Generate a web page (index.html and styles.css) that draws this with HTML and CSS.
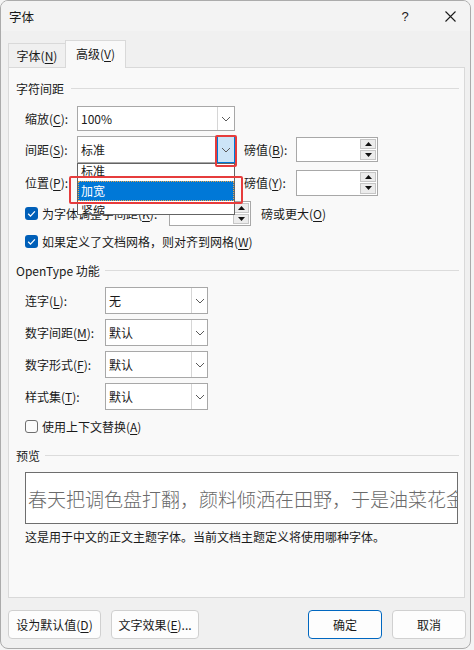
FILE: index.html
```html
<!DOCTYPE html>
<html lang="zh-CN">
<head>
<meta charset="utf-8">
<title>字体</title>
<link rel="stylesheet" href="styles.css">
</head>
<body>
<div class="window">
  <div class="titlebar">
    <span class="title">字体</span>
    <span class="tb-btn help">?</span>
    <span class="tb-btn close"><svg width="11" height="11" viewBox="0 0 11 11"><path d="M0.5 0.5L10.5 10.5M10.5 0.5L0.5 10.5" stroke="#1b1b1b" stroke-width="1.1" fill="none"/></svg></span>
  </div>
  <div class="tabs">
    <div class="tab">字体(<u>N</u>)</div>
    <div class="tab active">高级(<u>V</u>)</div>
  </div>
  <div class="panel">
    <div class="group-head"><span>字符间距</span><i class="rule"></i></div>

    <div class="row r-scale">
      <span class="lbl w52">缩放(<u>C</u>):</span>
      <div class="combo w158 h25"><span class="val">100%</span><span class="btn"><svg width="10" height="6" viewBox="0 0 10 6"><path d="M1 1L5 5L9 1" stroke="#5a5a5a" stroke-width="1" fill="none"/></svg></span></div>
    </div>

    <div class="row r-spacing">
      <span class="lbl w52">间距(<u>S</u>):</span>
      <div class="combo w158 h27 open">
        <span class="val">标准</span>
        <span class="btn hot"><svg width="10" height="6" viewBox="0 0 10 6"><path d="M1 1L5 5L9 1" stroke="#5a5a5a" stroke-width="1" fill="none"/></svg></span>
        <div class="list">
          <div class="item first">标准</div>
          <div class="item sel">加宽</div>
          <div class="item">紧缩</div>
        </div>
        <div class="mark mark-btn"></div>
        <div class="mark mark-item"></div>
      </div>
      <span class="lbl w52 ml9">磅值(<u>B</u>):</span>
      <div class="spin h25"><span class="spin-val"></span><span class="spin-btns"><span class="sb"><svg width="7" height="4" viewBox="0 0 7 4"><path d="M0 4L3.5 0L7 4Z" fill="#111"/></svg></span><span class="sb"><svg width="7" height="4" viewBox="0 0 7 4"><path d="M0 0L3.5 4L7 0Z" fill="#111"/></svg></span></span></div>
    </div>

    <div class="row r-pos">
      <span class="lbl w52">位置(<u>P</u>):</span>
      <span class="spacer w158"></span>
      <span class="lbl w52 ml9">磅值(<u>Y</u>):</span>
      <div class="spin h26"><span class="spin-val"></span><span class="spin-btns"><span class="sb"><svg width="7" height="4" viewBox="0 0 7 4"><path d="M0 4L3.5 0L7 4Z" fill="#111"/></svg></span><span class="sb"><svg width="7" height="4" viewBox="0 0 7 4"><path d="M0 0L3.5 4L7 0Z" fill="#111"/></svg></span></span></div>
    </div>

    <div class="row r-kern">
      <span class="cb on"><svg width="13" height="13" viewBox="0 0 13 13"><path d="M3.2 6.8L5.5 9.1L9.9 4.4" stroke="#fff" stroke-width="1.3" fill="none"/></svg></span>
      <span class="cb-lbl w127">为字体调整字间距(<u>K</u>):</span>
      <div class="spin h25"><span class="spin-val"></span><span class="spin-btns"><span class="sb"><svg width="7" height="4" viewBox="0 0 7 4"><path d="M0 4L3.5 0L7 4Z" fill="#111"/></svg></span><span class="sb"><svg width="7" height="4" viewBox="0 0 7 4"><path d="M0 0L3.5 4L7 0Z" fill="#111"/></svg></span></span></div>
      <span class="lbl ml10">磅或更大(<u>O</u>)</span>
    </div>

    <div class="row r-grid">
      <span class="cb on"><svg width="13" height="13" viewBox="0 0 13 13"><path d="M3.2 6.8L5.5 9.1L9.9 4.4" stroke="#fff" stroke-width="1.3" fill="none"/></svg></span>
      <span class="cb-lbl">如果定义了文档网格，则对齐到网格(<u>W</u>)</span>
    </div>

    <div class="group-head g-ot"><span>OpenType 功能</span><i class="rule"></i></div>

    <div class="row r-ot first-ot">
      <span class="lbl w80">连字(<u>L</u>):</span>
      <div class="combo w103 h27"><span class="val">无</span><span class="btn b16"><svg width="10" height="6" viewBox="0 0 10 6"><path d="M1 1L5 5L9 1" stroke="#5a5a5a" stroke-width="1" fill="none"/></svg></span></div>
    </div>
    <div class="row r-ot">
      <span class="lbl w80">数字间距(<u>M</u>):</span>
      <div class="combo w103 h27"><span class="val">默认</span><span class="btn b16"><svg width="10" height="6" viewBox="0 0 10 6"><path d="M1 1L5 5L9 1" stroke="#5a5a5a" stroke-width="1" fill="none"/></svg></span></div>
    </div>
    <div class="row r-ot">
      <span class="lbl w80">数字形式(<u>F</u>):</span>
      <div class="combo w103 h27"><span class="val">默认</span><span class="btn b16"><svg width="10" height="6" viewBox="0 0 10 6"><path d="M1 1L5 5L9 1" stroke="#5a5a5a" stroke-width="1" fill="none"/></svg></span></div>
    </div>
    <div class="row r-ot">
      <span class="lbl w80">样式集(<u>T</u>):</span>
      <div class="combo w103 h27"><span class="val">默认</span><span class="btn b16"><svg width="10" height="6" viewBox="0 0 10 6"><path d="M1 1L5 5L9 1" stroke="#5a5a5a" stroke-width="1" fill="none"/></svg></span></div>
    </div>

    <div class="row r-ctx">
      <span class="cb off"></span>
      <span class="cb-lbl">使用上下文替换(<u>A</u>)</span>
    </div>

    <div class="group-head g-pv"><span>预览</span><i class="rule"></i></div>
    <div class="preview"><span class="pv-text">春天把调色盘打翻，颜料倾洒在田野，于是油菜花金黄</span></div>
    <div class="caption">这是用于中文的正文主题字体。当前文档主题定义将使用哪种字体。</div>
  </div>
  <div class="footer">
    <span class="button b-default">设为默认值(<u>D</u>)</span>
    <span class="button b-effect">文字效果(<u>E</u>)...</span>
    <span class="button b-ok">确定</span>
    <span class="button b-cancel">取消</span>
  </div>
</div>
</body>
</html>
```
FILE: styles.css
```css
* { box-sizing: border-box; }
html, body { margin: 0; padding: 0; }
body {
  width: 474px;
  height: 650px;
  overflow: hidden;
  background: #f4f4f4;
  font-family: "Noto Sans CJK SC", "Microsoft YaHei", sans-serif;
  font-size: 12px;
  color: #1a1a1a;
}
u { text-decoration: underline; text-underline-offset: 2px; text-decoration-thickness: 1px; }

.window {
  width: 471px;
  height: 649px;
  border: 1px solid #ababab;
  border-radius: 8px;
  background: #f0f0f0;
  overflow: hidden;
  display: flex;
  flex-direction: column;
}

.titlebar {
  flex: none;
  height: 30px;
  background: #f3f3f3;
  display: flex;
  align-items: center;
}
.title { margin-left: 8px; font-size: 12.5px; }
.tb-btn { width: 40px; height: 30px; display: flex; align-items: center; justify-content: center; }
.help { margin-left: auto; margin-right: 5px; font-size: 13px; font-family: "Liberation Sans", sans-serif; }

.tabs {
  flex: none;
  height: 36px;
  display: flex;
  align-items: flex-end;
  padding-left: 7px;
  position: relative;
  z-index: 2;
}
.tab {
  width: 58px;
  height: 24px;
  border: 1px solid #d9d9d9;
  border-bottom: none;
  display: flex;
  align-items: center;
  justify-content: center;
}
.tab.active {
  width: 61px;
  height: 28px;
  margin-left: -1px;
  margin-bottom: -1px;
  background: #f9f9f9;
  padding-bottom: 2px;
}

.panel {
  flex: none;
  margin-left: 7px;
  width: 457px;
  height: 531px;
  border: 1px solid #d9d9d9;
  background: #f9f9f9;
  padding: 10px 5px 0 0;
}

.group-head {
  height: 20px;
  display: flex;
  align-items: center;
  padding-left: 7px;
}
.rule { flex: 1; height: 1px; background: #dcdcdc; margin-left: 7px; }
.g-ot { margin-top: 9px; }
.g-ot .rule { margin-left: 5px; }
.g-pv { margin-top: 9px; }
.g-pv .rule { margin-left: 5px; }

.row { display: flex; align-items: center; padding-left: 16px; }
.r-scale { margin-top: 8px; height: 25px; }
.r-spacing { margin-top: 5px; height: 27px; position: relative; z-index: 3; }
.r-pos { margin-top: 6px; height: 27px; }
.r-kern { margin-top: 4px; height: 26px; }
.r-grid { margin-top: 5px; height: 20px; }
.r-ot { margin-top: 5px; height: 27px; }
.first-ot { margin-top: 7px; }
.r-ctx { margin-top: 6px; height: 20px; }

.lbl { white-space: nowrap; flex: none; }
.w52 { width: 52px; }
.w80 { width: 80px; }
.w127 { width: 127px; }
.w158 { width: 158px; }
.w103 { width: 103px; }
.ml9 { margin-left: 9px; }
.ml10 { margin-left: 10px; }
.spacer { flex: none; height: 1px; }
.h25 { height: 25px; }
.h26 { height: 26px; }
.h27 { height: 27px; }

.combo {
  flex: none;
  display: flex;
  border: 1px solid #a8a8a8;
  background: #ffffff;
  position: relative;
}
.combo .val { flex: 1; padding-left: 3px; display: flex; align-items: center; }
.combo .btn {
  flex: none;
  width: 17px;
  border-left: 1px solid #d6d6d6;
  display: flex;
  align-items: center;
  justify-content: center;
}
.combo .btn.b16 { width: 16px; }
.combo .btn.hot {
  background: #cce4f7;
  border: 1px solid #0078d7;
  margin: -1px -1px -1px 0;
  width: 18px;
}

.list {
  position: absolute;
  left: -1px;
  top: 26px;
  width: 158px;
  height: 52px;
  border: 1px solid #646464;
  background: #ffffff;
  overflow: hidden;
}
.item { height: 20px; line-height: 20px; padding-left: 3px; }
.item.first { margin-top: -3px; }
.item.sel {
  background: #0078d7;
  color: #ffffff;
  outline: 1px dotted #e9a64a;
  outline-offset: -1px;
}

.mark {
  position: absolute;
  border: 2px solid #e63c3c;
  border-radius: 2px;
}
.mark-btn { left: 137px; top: -2px; width: 22px; height: 32px; }
.mark-item { left: -9px; top: 39px; width: 174px; height: 28px; }

.spin {
  flex: none;
  width: 82px;
  display: flex;
  border: 1px solid #a8a8a8;
  background: #ffffff;
}
.spin-val { flex: 1; }
.spin-btns {
  width: 17px;
  display: flex;
  flex-direction: column;
  gap: 1px;
  padding: 1px 1px 1px 0;
}
.sb {
  flex: 1;
  background: #ececec;
  border: 1px solid #c6c6c6;
  display: flex;
  align-items: center;
  justify-content: center;
}

.cb {
  flex: none;
  width: 13px;
  height: 13px;
  border-radius: 3px;
  display: flex;
}
.cb.on { background: #005fb8; }
.cb.off { background: #fbfbfb; border: 1px solid #6f6f6f; }
.cb-lbl { margin-left: 4px; white-space: nowrap; flex: none; }

.preview {
  margin-top: 7px;
  margin-left: 16px;
  width: 433px;
  height: 52px;
  border: 1px solid #6e6e6e;
  background: #ffffff;
  padding-left: 2px;
  overflow: hidden;
  white-space: nowrap;
  display: flex;
  align-items: center;
}
.pv-text { font-size: 19px; font-weight: 300; color: #6a6a6a; }

.caption { margin-top: 5px; padding-left: 16px; height: 16px; line-height: 16px; }

.footer {
  flex: none;
  margin-top: 12px;
  display: flex;
  padding: 0 4px 0 7px;
}
.button {
  height: 29px;
  border: 1px solid #d0d0d0;
  border-radius: 4px;
  background: #fdfdfd;
  display: flex;
  align-items: center;
  justify-content: center;
  white-space: nowrap;
}
.b-default { width: 93px; }
.b-effect { width: 88px; margin-left: 10px; }
.b-ok { width: 74px; margin-left: auto; border-color: #0067c0; }
.b-cancel { width: 74px; margin-left: 10px; }
```
